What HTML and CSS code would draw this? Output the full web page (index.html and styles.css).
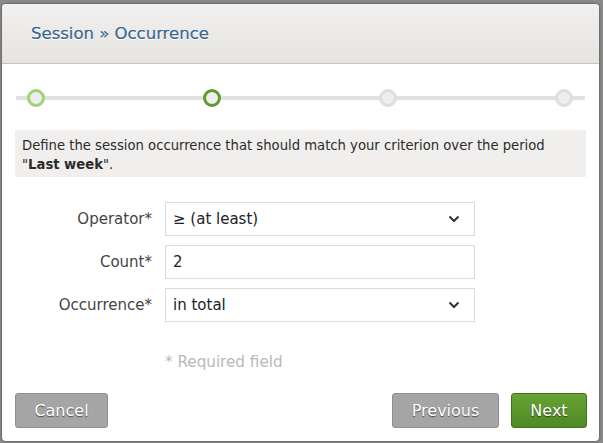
FILE: index.html
```html
<!DOCTYPE html>
<html>
<head>
<meta charset="utf-8">
<link rel="stylesheet" href="styles.css">
</head>
<body>
<div class="dialog">
  <div class="header"><h1 class="title">Session » Occurrence</h1></div>
  <div class="steps">
    <span class="stub"></span>
    <span class="dot done"></span>
    <span class="seg"></span>
    <span class="dot current"></span>
    <span class="seg"></span>
    <span class="dot"></span>
    <span class="seg"></span>
    <span class="dot"></span>
    <span class="stub end"></span>
  </div>
  <div class="info">Define the session occurrence that should match your criterion over the period "<b>Last week</b>".</div>
  <div class="form">
    <label class="label">Operator*</label>
    <div class="field select"><span>≥ (at least)</span><svg class="chev" width="12" height="8" viewBox="0 0 12 8"><path d="M1.5 1.5 L6 6 L10.5 1.5" fill="none" stroke="#333" stroke-width="2"/></svg></div>
    <label class="label">Count*</label>
    <div class="field"><span>2</span></div>
    <label class="label">Occurrence*</label>
    <div class="field select"><span>in total</span><svg class="chev" width="12" height="8" viewBox="0 0 12 8"><path d="M1.5 1.5 L6 6 L10.5 1.5" fill="none" stroke="#333" stroke-width="2"/></svg></div>
  </div>
  <div class="required">* Required field</div>
  <div class="buttons">
    <button class="btn grey cancel">Cancel</button>
    <div class="right">
      <button class="btn grey prev">Previous</button>
      <button class="btn green next">Next</button>
    </div>
  </div>
</div>
</body>
</html>
```
FILE: styles.css
```css
html, body { margin: 0; padding: 0; }
body {
  width: 603px;
  height: 443px;
  background: #8a8a8a;
  font-family: "DejaVu Sans", "Open Sans", sans-serif;
  overflow: hidden;
}
.dialog {
  margin: 4px 0 0 2px;
  width: 597px;
  height: 437px;
  background: #fff;
  border-radius: 4px;
  box-shadow: 0 0 2px 1px rgba(0,0,0,0.25);
  box-sizing: border-box;
  display: flex;
  flex-direction: column;
}
.header {
  height: 59px;
  border-bottom: 1px solid #c6c5c2;
  background: linear-gradient(#f1f0ee, #e5e4e1);
  border-radius: 4px 4px 0 0;
  display: flex;
  align-items: center;
  padding-left: 29px;
}
.title {
  margin: 0;
  font-size: 16.5px;
  font-weight: normal;
  color: #3a6890;
  text-shadow: 0 1px 0 #fff, 0 0 0.5px #3a6890;
}
.steps {
  display: flex;
  align-items: center;
  margin: 25px 0 0 14px;
  width: 569px;
  height: 18px;
}
.stub { width: 11px; height: 4px; background: #e1e1e1; }
.stub.end { width: 12px; }
.seg { width: 158px; height: 4px; background: #e1e1e1; }
.dot {
  width: 18px; height: 18px;
  box-sizing: border-box;
  border-radius: 50%;
  border: 3px solid #dddddd;
  background: #eeeeee;
}
.dot.done { border-color: #9fd274; }
.dot.current { border-color: #5e9a2f; }
.info {
  margin: 23px 0 0 13px;
  width: 571px;
  height: 47px;
  box-sizing: border-box;
  background: #f0efed;
  padding: 6px 7px 0;
  font-size: 13.2px;
  line-height: 19px;
  color: #2b2b2b;
}
.info b { font-weight: 700; }
.form {
  margin: 25px 0 0 0;
  display: grid;
  grid-template-columns: 150px 310px;
  column-gap: 13px;
  row-gap: 9px;
  font-size: 15px;
}
.label {
  text-align: right;
  align-self: center;
  color: #444;
}
.field {
  height: 34px;
  box-sizing: border-box;
  border: 1px solid #dcdcdc;
  display: flex;
  align-items: center;
  justify-content: space-between;
  padding: 0 14px 0 7px;
  color: #222;
}
.chev { display: block; }
.required {
  margin: 31px 0 0 163px;
  font-size: 15.2px;
  color: #b9b9b9;
}
.buttons {
  margin: 22px 0 0 13px;
  width: 572px;
  display: flex;
  justify-content: space-between;
}
.right { display: flex; gap: 12px; }
.btn {
  height: 35px;
  border-radius: 3px;
  font-family: inherit;
  font-size: 16px;
  color: #fff;
  text-shadow: 0 1px 1px rgba(0,0,0,0.55);
  padding: 0;
  cursor: pointer;
}
.btn.grey { background: #a5a5a5; border: 1px solid #8f8f8f; }
.btn.green { background: linear-gradient(#68a334, #4f8826); border: 1px solid #3e7419; }
.cancel { width: 93px; }
.prev { width: 107px; }
.next { width: 76px; }
```
